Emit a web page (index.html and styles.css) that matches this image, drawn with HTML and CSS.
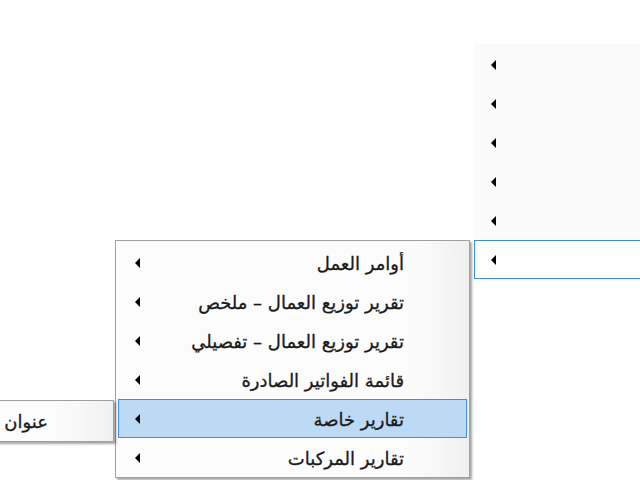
FILE: index.html
```html
<!DOCTYPE html>
<html lang="ar">
<head>
    <meta charset="UTF-8">
    <meta name="viewport" content="width=device-width, initial-scale=1.0">
    <title>قائمة التقارير</title>
    <link rel="stylesheet" href="styles.css">
</head>
<body>

    <div class="screen">

        <!-- القائمة الرئيسية (نصوصها خارج حدود الشاشة) -->
        <div class="menu menu-main">
            <div class="item"><span class="arrow"></span></div>
            <div class="item"><span class="arrow"></span></div>
            <div class="item"><span class="arrow"></span></div>
            <div class="item"><span class="arrow"></span></div>
            <div class="item"><span class="arrow"></span></div>
            <div class="item active"><span class="arrow"></span></div>
        </div>

        <!-- القائمة الفرعية -->
        <div class="menu menu-sub">
            <div class="item"><span class="label">أوامر العمل</span><span class="arrow"></span></div>
            <div class="item"><span class="label">تقرير توزيع العمال – ملخص</span><span class="arrow"></span></div>
            <div class="item"><span class="label">تقرير توزيع العمال – تفصيلي</span><span class="arrow"></span></div>
            <div class="item"><span class="label">قائمة الفواتير الصادرة</span><span class="arrow"></span></div>
            <div class="item selected"><span class="label">تقارير خاصة</span><span class="arrow"></span></div>
            <div class="item"><span class="label">تقارير المركبات</span><span class="arrow"></span></div>
        </div>

        <!-- القائمة الثالثة -->
        <div class="menu menu-third">
            <div class="item"><span class="label">عنوان</span></div>
        </div>

    </div>

</body>
</html>
```

FILE: styles.css
```css
body {
    margin: 0;
    background: #fff;
    font-family: "DejaVu Sans", sans-serif;
    font-size: 18px;
    color: #1a1a1a;
    overflow: hidden;
}

.screen {
    position: relative;
    width: 640px;
    height: 480px;
    overflow: hidden;
}

/* القوائم المنبثقة */
.menu {
    position: absolute;
    direction: rtl;
    box-sizing: border-box;
    background: linear-gradient(to left, #f0f0f0 0, #f7f7f7 30px, #fcfcfc 60px, #fcfcfc 100%);
}

.menu-main {
    left: 474px;
    top: 44px;
    width: 260px;
    padding: 1px 1px 2px 0;
    background: #fbfbfb;
}

.menu-main .item {
    justify-content: flex-end;
}

.menu-sub {
    left: 115px;
    top: 240px;
    width: 355px;
    height: 238px;
    padding: 2px 2px 0 2px;
    border: 1px solid #a0a0a0;
    box-shadow: 2px 2px 2px rgba(0, 0, 0, 0.35);
}

.menu-third {
    left: -60px;
    top: 400px;
    width: 174px;
    height: 42px;
    border: 1px solid #a0a0a0;
    box-shadow: 2px 2px 2px rgba(0, 0, 0, 0.35);
}

.item {
    display: flex;
    align-items: center;
    justify-content: space-between;
    box-sizing: border-box;
    height: 39px;
    padding: 0 62px 0 16px;
    border: 1px solid transparent;
}

.menu-third .item {
    height: 40px;
    padding-right: 64px;
}

.label {
    white-space: nowrap;
    line-height: 1;
    padding-top: 2px;
    -webkit-text-stroke: 0.3px #1a1a1a;
}

/* سهم القائمة الفرعية */
.arrow {
    width: 0;
    height: 0;
    border-top: 5px solid transparent;
    border-bottom: 5px solid transparent;
    border-right: 5px solid #000;
}

.item.active {
    background: #fff;
    border-color: #3c8fe3;
}

.item.selected {
    background: #bcdaf4;
    border-color: #3c8fe3;
}
```
